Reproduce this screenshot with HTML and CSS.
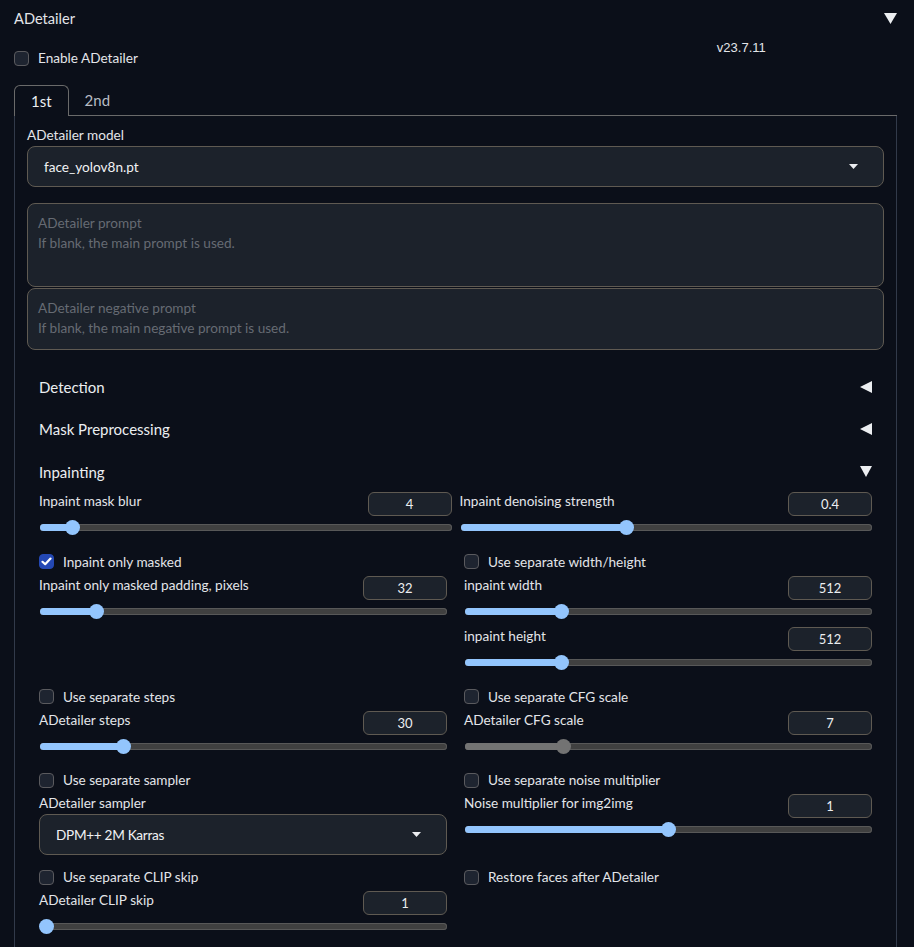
FILE: index.html
```html
<!DOCTYPE html>
<html>
<head>
<meta charset="utf-8">
<link rel="stylesheet" href="styles.css">
</head>
<body>
<div class="acc">
  <div class="acc-head">
    <span class="acc-title">ADetailer</span>
    <svg class="tri-lg" width="13" height="11" viewBox="0 0 13 11"><polygon points="0,0 13,0 6.5,11"/></svg>
  </div>
  <div class="top-row">
    <label class="check"><span class="box"></span><span class="ctext">Enable ADetailer</span></label>
    <div class="version">v23.7.11</div>
  </div>
  <div class="tabs">
    <div class="tab-nav">
      <div class="tab active">1st</div>
      <div class="tab">2nd</div>
    </div>
    <div class="tab-panel">
      <div class="field">
        <div class="lbl">ADetailer model</div>
        <div class="dropdown"><span>face_yolov8n.pt</span><svg width="9" height="5" viewBox="0 0 9 5"><polygon points="0,0 9,0 4.5,5"/></svg></div>
      </div>
      <div class="prompts">
        <div class="textarea tall"><span class="ph">ADetailer prompt<br>If blank, the main prompt is used.</span></div>
        <div class="textarea"><span class="ph">ADetailer negative prompt<br>If blank, the main negative prompt is used.</span></div>
      </div>
      <div class="sub-accs">
        <div class="sub-head"><span>Detection</span><svg width="12" height="12" viewBox="0 0 12 12"><polygon points="12,0 12,12 0,6"/></svg></div>
        <div class="sub-head"><span>Mask Preprocessing</span><svg width="12" height="12" viewBox="0 0 12 12"><polygon points="12,0 12,12 0,6"/></svg></div>
        <div class="sub-head"><span>Inpainting</span><svg width="12" height="11" viewBox="0 0 12 11"><polygon points="0,0 12,0 6,11"/></svg></div>
        <div class="sub-body">
          <div class="row1">
            <div class="slider">
              <div class="slider-top"><span class="lbl">Inpaint mask blur</span><span class="num">4</span></div>
              <div class="track"><div class="fill" style="width:7.8%"></div><div class="thumb" style="left:7.8%"></div></div>
            </div>
            <div class="slider">
              <div class="slider-top"><span class="lbl">Inpaint denoising strength</span><span class="num">0.4</span></div>
              <div class="track"><div class="fill" style="width:40.3%"></div><div class="thumb" style="left:40.3%"></div></div>
            </div>
          </div>
          <div class="rows">
            <div class="col">
              <label class="check"><span class="box on"><svg width="11" height="9" viewBox="0 0 11 9"><polyline points="1.5,4.8 4.2,7.2 9.5,1.6" fill="none" stroke="#fff" stroke-width="2.2" stroke-linecap="round" stroke-linejoin="round"/></svg></span><span class="ctext">Inpaint only masked</span></label>
              <div class="slider">
                <div class="slider-top"><span class="lbl">Inpaint only masked padding, pixels</span><span class="num">32</span></div>
                <div class="track"><div class="fill" style="width:13.8%"></div><div class="thumb" style="left:13.8%"></div></div>
              </div>
            </div>
            <div class="col">
              <label class="check"><span class="box"></span><span class="ctext">Use separate width/height</span></label>
              <div class="slider">
                <div class="slider-top"><span class="lbl">inpaint width</span><span class="num">512</span></div>
                <div class="track"><div class="fill" style="width:23.6%"></div><div class="thumb" style="left:23.6%"></div></div>
              </div>
              <div class="slider">
                <div class="slider-top"><span class="lbl">inpaint height</span><span class="num">512</span></div>
                <div class="track"><div class="fill" style="width:23.6%"></div><div class="thumb" style="left:23.6%"></div></div>
              </div>
            </div>

            <div class="col">
              <label class="check"><span class="box"></span><span class="ctext">Use separate steps</span></label>
              <div class="slider">
                <div class="slider-top"><span class="lbl">ADetailer steps</span><span class="num">30</span></div>
                <div class="track"><div class="fill" style="width:20.4%"></div><div class="thumb" style="left:20.4%"></div></div>
              </div>
            </div>
            <div class="col">
              <label class="check"><span class="box"></span><span class="ctext">Use separate CFG scale</span></label>
              <div class="slider disabled">
                <div class="slider-top"><span class="lbl">ADetailer CFG scale</span><span class="num">7</span></div>
                <div class="track"><div class="fill" style="width:24.3%"></div><div class="thumb" style="left:24.3%"></div></div>
              </div>
            </div>

            <div class="col">
              <label class="check"><span class="box"></span><span class="ctext">Use separate sampler</span></label>
              <div class="field small">
                <div class="lbl">ADetailer sampler</div>
                <div class="dropdown sampler"><span>DPM++ 2M Karras</span><svg width="9" height="5" viewBox="0 0 9 5"><polygon points="0,0 9,0 4.5,5"/></svg></div>
              </div>
            </div>
            <div class="col">
              <label class="check"><span class="box"></span><span class="ctext">Use separate noise multiplier</span></label>
              <div class="slider">
                <div class="slider-top"><span class="lbl">Noise multiplier for img2img</span><span class="num">1</span></div>
                <div class="track"><div class="fill" style="width:49.9%"></div><div class="thumb" style="left:49.9%"></div></div>
              </div>
            </div>

            <div class="col">
              <label class="check"><span class="box"></span><span class="ctext">Use separate CLIP skip</span></label>
              <div class="slider">
                <div class="slider-top"><span class="lbl">ADetailer CLIP skip</span><span class="num">1</span></div>
                <div class="track"><div class="fill" style="width:1.5%"></div><div class="thumb" style="left:1.5%"></div></div>
              </div>
            </div>
            <div class="col">
              <label class="check"><span class="box"></span><span class="ctext">Restore faces after ADetailer</span></label>
            </div>
          </div>
        </div>
      </div>
    </div>
  </div>
</div>
</body>
</html>
```

FILE: styles.css
```css
* { box-sizing: border-box; }
html, body {
  margin: 0;
  background: #0b0f19;
  color: #e3e5e9;
  font-family: "Source Sans Pro", Lato, "Liberation Sans", sans-serif;
  font-size: 13.6px;
}
.acc { padding: 0 17px 0 14px; }
.acc-head {
  height: 36px;
  display: flex;
  align-items: center;
  justify-content: space-between;
}
.acc-title { font-size: 14.6px; }
svg polygon { fill: #eceef1; }

.top-row {
  height: 49px;
  display: flex;
  align-items: flex-start;
}
.check {
  display: flex;
  align-items: center;
  height: 20px;
  gap: 9px;
}
.top-row .check { margin-top: 12px; flex: 0 0 auto; }
.box {
  width: 15px;
  height: 15px;
  border-radius: 4px;
  background: #1e2430;
  border: 1px solid #5a5a5e;
  display: flex;
  align-items: center;
  justify-content: center;
  flex: 0 0 auto;
}
.box.on { background: #2448b4; border-color: #2448b4; }
.ctext { line-height: 18px; }
.version {
  margin-left: 579px;
  margin-top: 3px;
  line-height: 18px;
  font-size: 13px;
  font-family: "Liberation Sans", sans-serif;
}

.tab-nav {
  display: flex;
  height: 31px;
  border-bottom: 1px solid #6a6a6a;
}
.tab {
  height: 31px;
  padding: 0 16px;
  font-size: 15px;
  line-height: 31px;
  color: #b8bcc4;
}
.tab.active {
  color: #eceef1;
  border: 1px solid #6a6a6a;
  border-bottom: none;
  border-radius: 6px 6px 0 0;
  background: #0b0f19;
  height: 31px;
  margin-bottom: -1px;
  line-height: 30px;
}
.tab-panel {
  border: 1px solid #323a4a;
  border-top: none;
  padding: 10px 12px 30px;
}
.field .lbl { line-height: 18px; margin-bottom: 2px; }
.dropdown {
  height: 41px;
  background: #1c222b;
  border: 1px solid #5f5a52;
  border-radius: 8px;
  display: flex;
  align-items: center;
  justify-content: space-between;
  padding: 0 25px 0 16px;
  font-size: 13.6px;
  color: #f1f2f4;
}
.dropdown.sampler {
  letter-spacing: -0.3px;
}
.prompts {
  margin-top: 16px;
  display: flex;
  flex-direction: column;
  gap: 1px;
}
.textarea {
  height: 62px;
  background: #1c222b;
  border: 1px solid #5f5a52;
  border-radius: 8px;
  padding: 9px 10px;
}
.textarea.tall { height: 84px; }
.ph { color: #666b73; line-height: 20px; }

.sub-accs { margin-top: 16px; padding: 0 12px; }
.sub-head {
  height: 42px;
  display: flex;
  align-items: center;
  justify-content: space-between;
  font-size: 15px;
  color: #eceef1;
}
.sub-head + .sub-head { height: 42.5px; }
.sub-body { margin-top: -1px; }
.row1 {
  display: grid;
  grid-template-columns: 1fr 1fr;
  column-gap: 8px;
}
.rows {
  margin-top: 12px;
  display: grid;
  grid-template-columns: 1fr 1fr;
  column-gap: 17px;
  row-gap: 12px;
}
.col {
  display: flex;
  flex-direction: column;
  gap: 4px;
}
.slider { height: 47.5px; }
.slider-top {
  height: 24px;
  display: flex;
  justify-content: space-between;
  align-items: flex-start;
}
.slider-top .lbl { line-height: 18px; }
.num {
  width: 84px;
  height: 24px;
  border: 1px solid #5f5a52;
  border-radius: 6px;
  background: #1c222b;
  text-align: center;
  line-height: 22px;
  font-size: 13px;
  color: #eceef1;
}
.track {
  position: relative;
  margin-top: 8px;
  height: 7px;
  border-radius: 4px;
  background: #404040;
  box-shadow: inset 0 0 0 1px #585858;
  margin-left: 1px;
}
.fill {
  position: absolute;
  left: 0; top: 0; bottom: 0;
  border-radius: 4px;
  background: #93c5fd;
}
.thumb {
  position: absolute;
  top: -4px;
  width: 15px;
  height: 15px;
  margin-left: -7.5px;
  border-radius: 50%;
  background: #93c5fd;
}
.disabled .fill, .disabled .thumb { background: #737373; }
```
